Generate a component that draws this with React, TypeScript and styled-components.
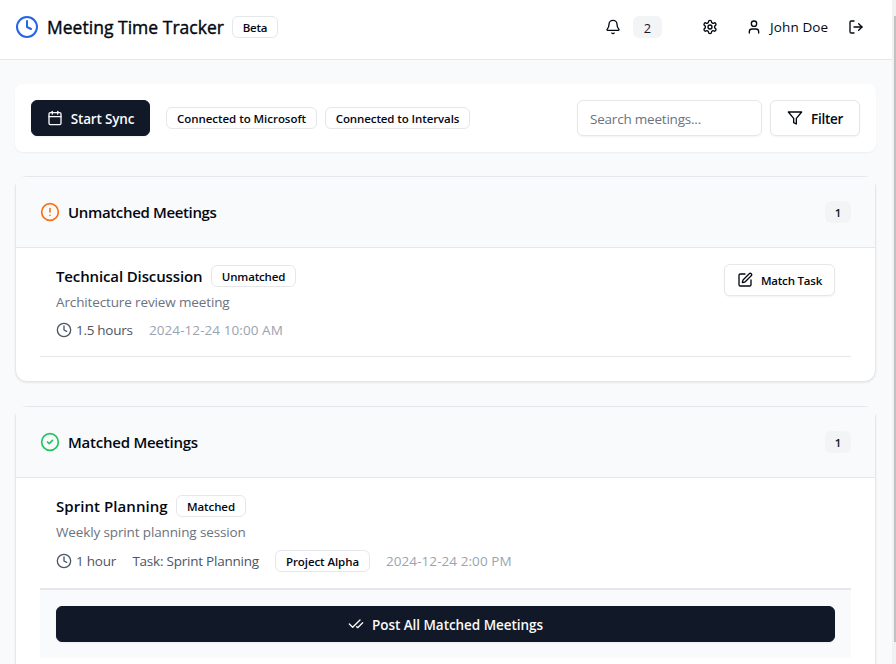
import React from 'react';
import styled, { createGlobalStyle, css } from 'styled-components';
import {
  Bell,
  Calendar,
  CheckCheck,
  CircleAlert,
  CircleCheck,
  Clock,
  LogOut,
  SquarePen,
  User,
} from 'lucide-react';

const GlobalStyle = createGlobalStyle`
  *, *::before, *::after { box-sizing: border-box; }
  body {
    margin: 0;
    background: #f9fafb;
    color: #030712;
    font-family: "Open Sans", "Noto Sans", sans-serif;
    font-size: 13.5px;
    line-height: 20px;
  }
  h1, h2, h3, p { margin: 0; }
  svg { flex: none; display: block; }
`;

type Tracking = { $ls?: number };
const tracking = css<Tracking>`
  letter-spacing: ${(p) => p.$ls ?? 0}px;
  white-space: nowrap;
`;

const Window = styled.div`
  display: flex;
  width: 896px;
  height: 664px;
  overflow: hidden;
`;

const Page = styled.div`
  flex: 1;
  min-width: 0;
`;

const ScrollTrack = styled.div`
  width: 4px;
  padding: 16px 0 22px 2px;
  background: #f1f1f1;
`;

const ScrollThumb = styled.div`
  height: 100%;
  background: #c1c1c1;
`;

const Header = styled.header`
  display: flex;
  align-items: center;
  justify-content: space-between;
  height: 60px;
  padding: 0 28px 5px 15px;
  background: #fff;
  border-bottom: 1px solid #e5e7eb;
`;

const Brand = styled.div`
  display: flex;
  align-items: center;
  gap: 8px;
  color: #2563eb;
`;

const AppTitle = styled.h1<Tracking>`
  width: 177px;
  color: #030712;
  font-size: 17.5px;
  font-weight: 400;
  -webkit-text-stroke: 0.4px #030712;
  line-height: 28px;
  ${tracking}
`;

const HeaderActions = styled.div`
  display: flex;
  align-items: center;
`;

const Notifications = styled.div`
  display: flex;
  align-items: center;
  gap: 12px;
  margin-right: 40px;
`;

const Account = styled.div`
  display: flex;
  align-items: center;
  gap: 8px;
  margin: 0 20px 0 28px;
`;

const UserName = styled.span<Tracking>`
  width: 58px;
  ${tracking}
`;

const Badge = styled.span<Tracking & { $width: number; $muted?: boolean }>`
  display: inline-flex;
  flex: none;
  align-items: center;
  justify-content: center;
  width: ${(p) => p.$width}px;
  height: 22px;
  padding-top: 1px;
  border: 1px solid ${(p) => (p.$muted ? 'transparent' : '#e5e7eb')};
  border-radius: 6px;
  background: ${(p) => (p.$muted ? '#f3f4f6' : 'transparent')};
  background-clip: border-box;
  color: ${(p) => (p.$muted ? '#111827' : '#030712')};
  font-size: 11.5px;
  font-weight: 600;
  line-height: 16px;
  ${tracking}
`;

const CountBadge = styled(Badge)<{ $large?: boolean }>`
  font-size: ${(p) => (p.$large ? 12.8 : 11.5)}px;
  font-weight: ${(p) => (p.$large ? 400 : 600)};
`;

const Main = styled.main`
  display: flex;
  flex-direction: column;
  gap: 24px;
  padding: 24px 16px 24px 15px;
`;

const Toolbar = styled.section`
  display: flex;
  align-items: center;
  justify-content: space-between;
  height: 68px;
  padding: 16px;
  border-radius: 8px;
  background: #fff;
  box-shadow: 0 1px 2px rgba(0, 0, 0, 0.05);
`;

const ToolbarGroup = styled.div`
  display: flex;
  align-items: center;
  gap: 8px;
`;

const Button = styled.button<Tracking & { $width?: number; $primary?: boolean; $small?: boolean }>`
  display: flex;
  flex: none;
  align-items: center;
  justify-content: center;
  gap: 8px;
  width: ${(p) => (p.$width ? `${p.$width}px` : '100%')};
  height: ${(p) => (p.$small ? 32 : 36)}px;
  padding: 0;
  border: 1px solid ${(p) => (p.$primary ? '#111827' : '#e5e7eb')};
  border-radius: 6px;
  background: ${(p) => (p.$primary ? '#111827' : '#fff')};
  color: ${(p) => (p.$primary ? '#f9fafb' : '#030712')};
  font-family: inherit;
  font-size: ${(p) => (p.$small ? 11.5 : 13.5)}px;
  font-weight: 600;
  line-height: 20px;
  box-shadow: 0 1px 2px rgba(0, 0, 0, 0.05);
  ${tracking}
`;

const ButtonLabel = styled.span`
  padding-top: 2px;
`;

const SyncButton = styled(Button)`
  margin-right: 8px;
`;

const SearchInput = styled.input`
  width: 185px;
  height: 36px;
  padding: 4px 12px 2px;
  border: 1px solid #e5e7eb;
  border-radius: 6px;
  outline: none;
  background: transparent;
  font: inherit;
  letter-spacing: -0.21px;
  box-shadow: 0 1px 2px rgba(0, 0, 0, 0.05);
  &::placeholder { color: #6b7280; }
`;

const Card = styled.section`
  border: 1px solid #e5e7eb;
  border-radius: 12px;
  background: #fff;
  box-shadow: 0 1px 2px rgba(0, 0, 0, 0.08);
`;

const CardHeader = styled.header`
  display: flex;
  align-items: center;
  justify-content: space-between;
  height: 71px;
  padding: 0 24px;
  border-bottom: 1px solid #e5e7eb;
  background: #f9fafb;
`;

const CardTitle = styled.h2<Tracking>`
  display: flex;
  align-items: center;
  gap: 8px;
  font-size: 15px;
  font-weight: 600;
  line-height: 22px;
  ${tracking}
`;

const CardBody = styled.div`
  padding: 0 24px 24px;
`;

const Meeting = styled.article`
  display: flex;
  align-items: flex-start;
  justify-content: space-between;
  padding: 16px;
  border-bottom: 1px solid #e5e7eb;
`;

const MeetingHeading = styled.div`
  display: flex;
  align-items: center;
  gap: 8px;
  height: 24px;
`;

const MeetingTitle = styled.h3<Tracking & { $width: number }>`
  width: ${(p) => p.$width}px;
  font-size: 15px;
  font-weight: 600;
  line-height: 24px;
  ${tracking}
`;

const Description = styled.p<Tracking>`
  margin-top: 4px;
  color: #6b7280;
  ${tracking}
`;

const Meta = styled.div`
  display: flex;
  align-items: center;
  margin-top: 8px;
  gap: 16px;
  color: #4b5563;
`;

const MetaItem = styled.span<Tracking & { $width: number; $faint?: boolean }>`
  display: flex;
  align-items: center;
  gap: 4px;
  width: ${(p) => p.$width}px;
  color: ${(p) => (p.$faint ? '#9ca3af' : '#4b5563')};
  ${tracking}
`;

const PostBar = styled.div`
  padding: 16px;
  border-top: 1px solid #e5e7eb;
  background: #f9fafb;
`;

const GearIcon = () => (
  <svg width="16" height="16" viewBox="0 0 24 24" fill="none" stroke="currentColor" strokeWidth="2" strokeLinecap="round" strokeLinejoin="round">
    <path d="M12.22 2h-.44a2 2 0 0 0-2 2v.18a2 2 0 0 1-1 1.73l-.43.25a2 2 0 0 1-2 0l-.15-.08a2 2 0 0 0-2.73.73l-.22.38a2 2 0 0 0 .73 2.73l.15.1a2 2 0 0 1 1 1.72v.51a2 2 0 0 1-1 1.74l-.15.09a2 2 0 0 0-.73 2.73l.22.38a2 2 0 0 0 2.73.73l.15-.08a2 2 0 0 1 2 0l.43.25a2 2 0 0 1 1 1.73V20a2 2 0 0 0 2 2h.44a2 2 0 0 0 2-2v-.18a2 2 0 0 1 1-1.73l.43-.25a2 2 0 0 1 2 0l.15.08a2 2 0 0 0 2.73-.73l.22-.39a2 2 0 0 0-.73-2.73l-.15-.08a2 2 0 0 1-1-1.74v-.5a2 2 0 0 1 1-1.74l.15-.09a2 2 0 0 0 .73-2.73l-.22-.38a2 2 0 0 0-2.73-.73l-.15.08a2 2 0 0 1-2 0l-.43-.25a2 2 0 0 1-1-1.73V4a2 2 0 0 0-2-2z" />
    <circle cx="12" cy="12" r="3" />
  </svg>
);

const FunnelIcon = () => (
  <svg width="16" height="16" viewBox="0 0 24 24" fill="none" stroke="currentColor" strokeWidth="2" strokeLinecap="round" strokeLinejoin="round">
    <polygon points="22 3 2 3 10 12.46 10 19 14 21 14 12.46 22 3" />
  </svg>
);

export default function App() {
  return (
    <Window>
      <GlobalStyle />
      <Page>
        <Header>
          <Brand>
            <Clock size={24} />
            <AppTitle $ls={0.02}>Meeting Time Tracker</AppTitle>
            <Badge $width={46} $ls={-0.25}>Beta</Badge>
          </Brand>
          <HeaderActions>
            <Notifications>
              <Bell size={16} />
              <CountBadge $width={29} $muted $large>2</CountBadge>
            </Notifications>
            <GearIcon />
            <Account>
              <User size={16} />
              <UserName $ls={0.12}>John Doe</UserName>
            </Account>
            <LogOut size={16} />
          </HeaderActions>
        </Header>

        <Main>
          <Toolbar>
            <ToolbarGroup>
              <SyncButton $primary $width={119} $ls={-0.16}>
                <Calendar size={16} />
                <ButtonLabel>Start Sync</ButtonLabel>
              </SyncButton>
              <Badge $width={151} $ls={-0.04}>Connected to Microsoft</Badge>
              <Badge $width={145} $ls={-0.1}>Connected to Intervals</Badge>
            </ToolbarGroup>
            <ToolbarGroup>
              <SearchInput placeholder="Search meetings..." />
              <Button $width={90} $ls={-0.28}>
                <FunnelIcon />
                <ButtonLabel>Filter</ButtonLabel>
              </Button>
            </ToolbarGroup>
          </Toolbar>

          <Card>
            <CardHeader>
              <CardTitle $ls={-0.35}>
                <CircleAlert size={20} color="#f97316" />
                Unmatched Meetings
              </CardTitle>
              <CountBadge $width={26} $muted>1</CountBadge>
            </CardHeader>
            <CardBody>
              <Meeting>
                <div>
                  <MeetingHeading>
                    <MeetingTitle $width={147} $ls={-0.13}>Technical Discussion</MeetingTitle>
                    <Badge $width={85} $ls={-0.17}>Unmatched</Badge>
                  </MeetingHeading>
                  <Description $ls={-0.13}>Architecture review meeting</Description>
                  <Meta>
                    <MetaItem $width={77} $ls={-0.28}><Clock size={16} />1.5 hours</MetaItem>
                    <MetaItem $width={134} $faint $ls={0.07}>2024-12-24 10:00 AM</MetaItem>
                  </Meta>
                </div>
                <Button $small $width={111} $ls={-0.2}>
                  <SquarePen size={16} />
                  <ButtonLabel>Match Task</ButtonLabel>
                </Button>
              </Meeting>
            </CardBody>
          </Card>

          <Card>
            <CardHeader>
              <CardTitle $ls={-0.24}>
                <CircleCheck size={20} color="#22c55e" />
                Matched Meetings
              </CardTitle>
              <CountBadge $width={26} $muted>1</CountBadge>
            </CardHeader>
            <CardBody>
              <Meeting>
                <div>
                  <MeetingHeading>
                    <MeetingTitle $width={112} $ls={0.06}>Sprint Planning</MeetingTitle>
                    <Badge $width={70} $ls={-0.1}>Matched</Badge>
                  </MeetingHeading>
                  <Description $ls={-0.13}>Weekly sprint planning session</Description>
                  <Meta>
                    <MetaItem $width={60.4} $ls={-0.25}><Clock size={16} />1 hour</MetaItem>
                    <MetaItem $width={126.6} $ls={-0.23}>Task: Sprint Planning</MetaItem>
                    <Badge $width={95} $ls={-0.08}>Project Alpha</Badge>
                    <MetaItem $width={126} $faint $ls={0.07}>2024-12-24 2:00 PM</MetaItem>
                  </Meta>
                </div>
              </Meeting>
              <PostBar>
                <Button $primary $ls={-0.05}>
                  <CheckCheck size={16} />
                  <ButtonLabel>Post All Matched Meetings</ButtonLabel>
                </Button>
              </PostBar>
            </CardBody>
          </Card>
        </Main>
      </Page>
      <ScrollTrack>
        <ScrollThumb />
      </ScrollTrack>
    </Window>
  );
}
